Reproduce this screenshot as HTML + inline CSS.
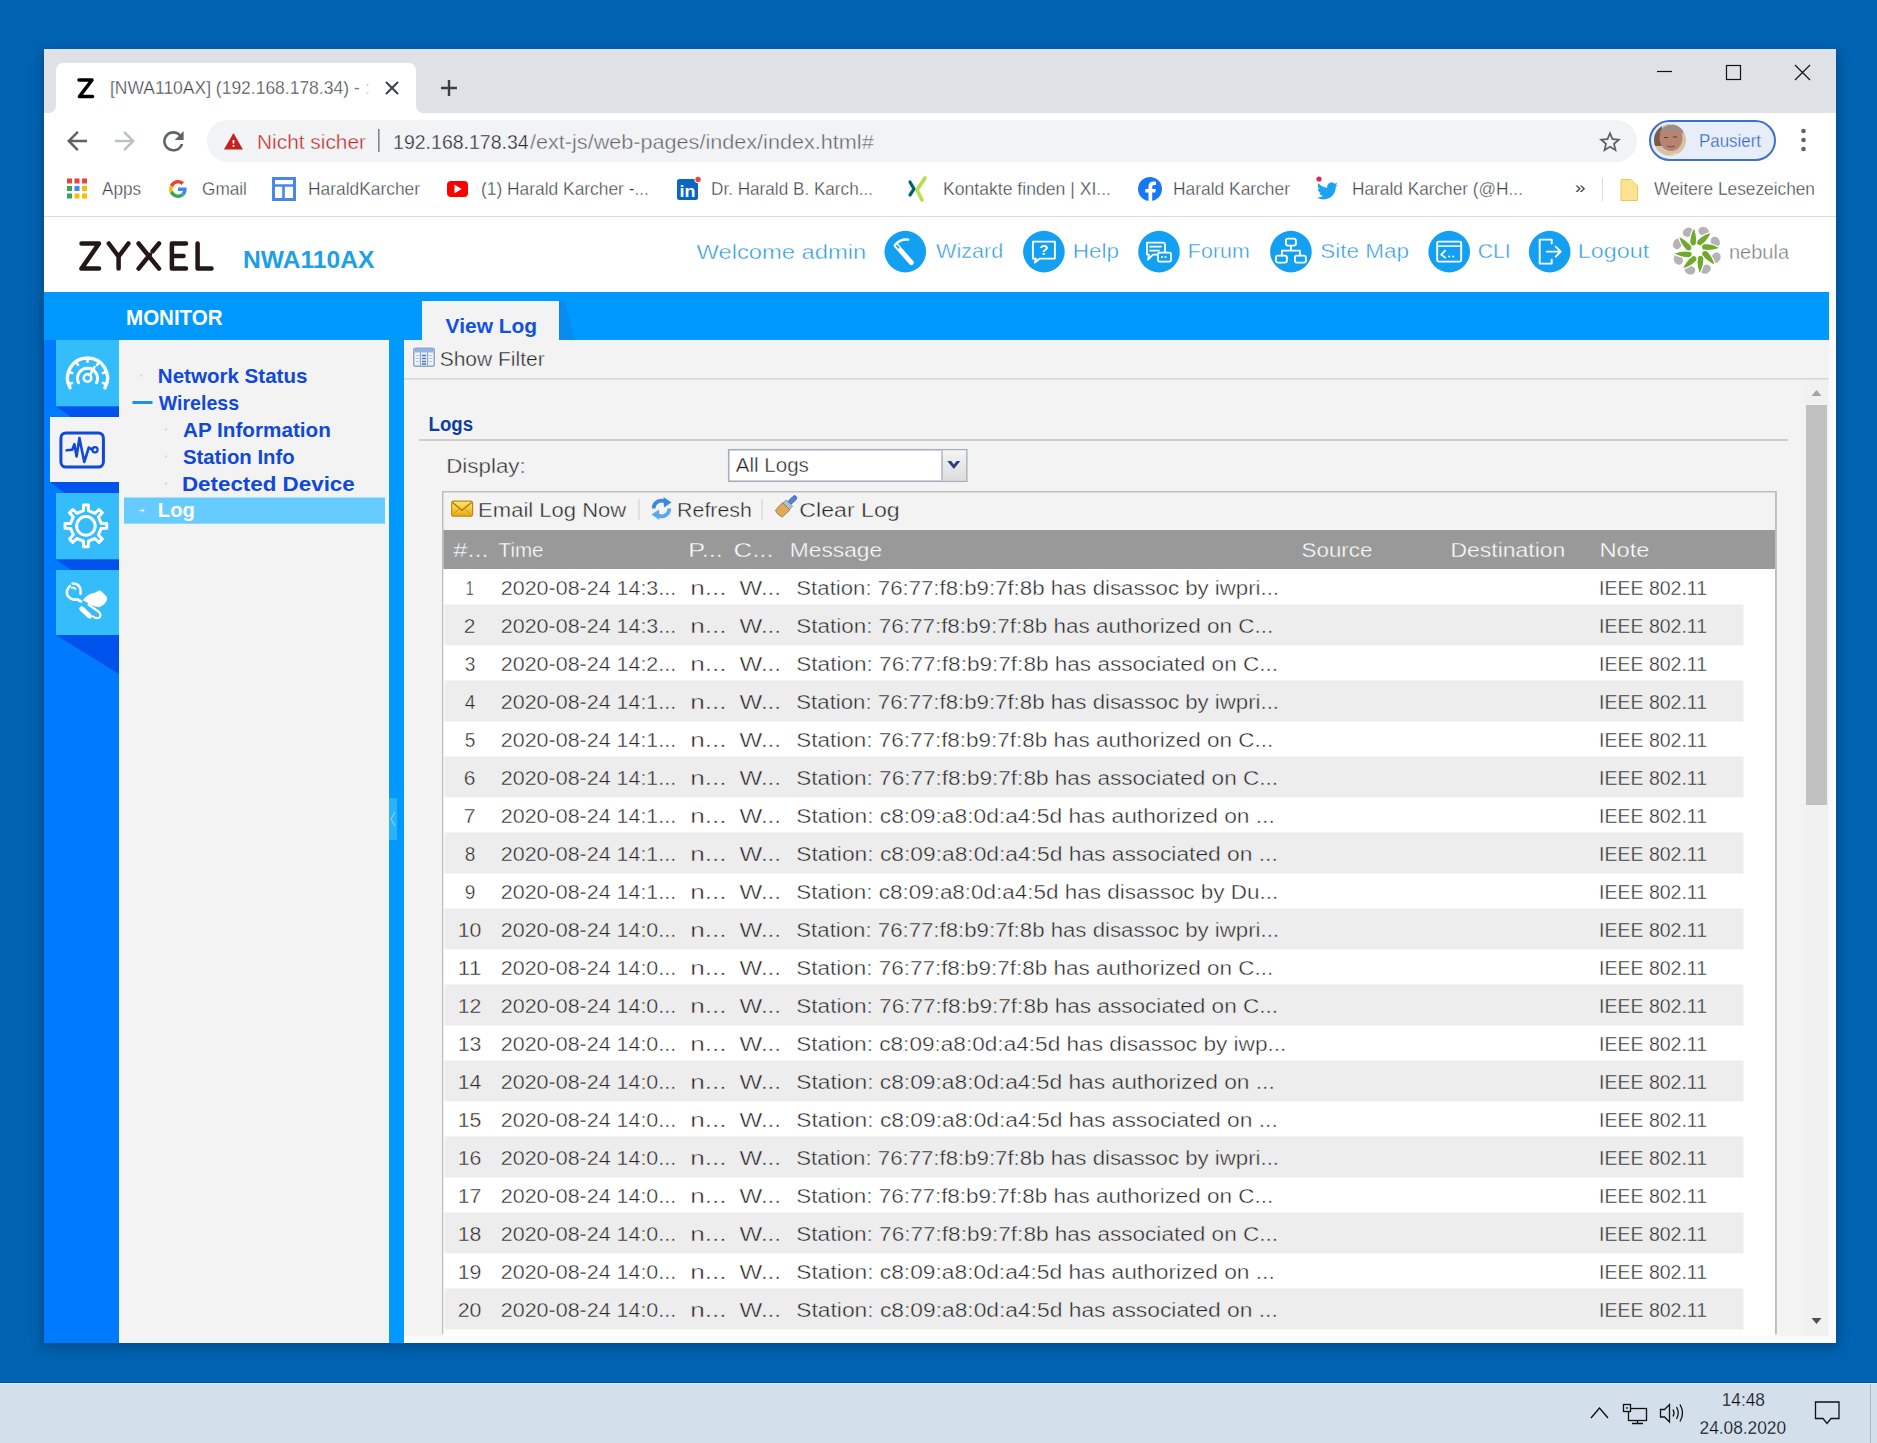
<!DOCTYPE html>
<html><head><meta charset="utf-8"><title>NWA110AX View Log</title>
<style>
html,body{margin:0;padding:0;width:1877px;height:1443px;overflow:hidden;background:#0063B1;}
svg{position:absolute;left:0;top:0;display:block;}
text{white-space:pre;}

</style></head><body>
<svg width="1877" height="1443" viewBox="0 0 1877 1443" font-family="Liberation Sans">
<rect x="0" y="0" width="1877" height="1383" fill="#0063B1" />
<defs><filter id="shd" x="-5%" y="-5%" width="110%" height="110%"><feGaussianBlur stdDeviation="6"/></filter><linearGradient id="tabfade" x1="0" x2="1"><stop offset="0" stop-color="#fff" stop-opacity="0"/><stop offset="1" stop-color="#fff"/></linearGradient><linearGradient id="trig" x1="0" x2="0" y1="0" y2="1"><stop offset="0" stop-color="#f4f4f4"/><stop offset="1" stop-color="#dcdcdc"/></linearGradient><radialGradient id="avatar" cx="0.45" cy="0.45" r="0.6"><stop offset="0" stop-color="#c89a82"/><stop offset="0.6" stop-color="#9a6d58"/><stop offset="1" stop-color="#d9c3a0"/></radialGradient></defs>
<rect x="41" y="52" width="1798" height="1296" fill="#00386a" filter="url(#shd)" opacity="0.5"/>
<rect x="0" y="1383" width="1877" height="60" fill="#D3DFEA" />
<rect x="44" y="49" width="1792" height="1294" fill="#FFFFFF" />
<rect x="44" y="49" width="1792" height="64" fill="#DEE1E6" />
<path d="M48 113 Q56 113 56 105 L56 71 Q56 63 64 63 L408 63 Q416 63 416 71 L416 105 Q416 113 424 113 Z" fill="#FFFFFF"/>
<path d="M79 80 L92 80 L79.5 96.5 L92.5 96.5" fill="none" stroke="#000" stroke-width="3.6" stroke-linejoin="round" stroke-linecap="round"/>
<text x="110.03" y="94" font-family="Liberation Sans" font-size="18" fill="#3C4043" textLength="238.94" lengthAdjust="spacingAndGlyphs"  stroke="#fff" stroke-width="0.35">[NWA110AX] (192.168.178.34)</text>
<text x="354.00" y="94" font-family="Liberation Sans" font-size="18" fill="#3C4043" >- :</text>
<rect x="349" y="70" width="24" height="36" fill="url(#tabfade)" />
<rect x="373" y="70" width="7" height="36" fill="#FFFFFF" />
<path d="M386.5 82.5 L397.5 93.5 M397.5 82.5 L386.5 93.5" stroke="#3C4043" stroke-width="2" stroke-linecap="round"/>
<path d="M449 80 V96 M441 88 H457" stroke="#3C4043" stroke-width="2.4"/>
<path d="M1657 71.5 H1672" stroke="#111" stroke-width="1.2"/>
<rect x="1726.5" y="65.5" width="14" height="14" fill="none" stroke="#111" stroke-width="1.2"/>
<path d="M1795 65 L1810 80 M1810 65 L1795 80" stroke="#111" stroke-width="1.2"/>
<g transform="translate(62,126) scale(1.25)"><path d="M20 11H7.83l5.59-5.59L12 4l-8 8 8 8 1.41-1.41L7.83 13H20v-2z" fill="#5F6368"/></g>
<g transform="translate(140,126) scale(-1.25,1.25)"><path d="M20 11H7.83l5.59-5.59L12 4l-8 8 8 8 1.41-1.41L7.83 13H20v-2z" fill="#BDC1C6"/></g>
<g transform="translate(158,126) scale(1.28)"><path d="M17.65 6.35C16.2 4.9 14.21 4 12 4c-4.42 0-7.99 3.58-7.99 8s3.57 8 7.99 8c3.73 0 6.84-2.55 7.73-6h-2.08c-.82 2.33-3.04 4-5.65 4-3.31 0-6-2.69-6-6s2.69-6 6-6c1.66 0 3.140.69 4.22 1.78L13 11h7V4l-2.35 2.35z" fill="#5F6368"/></g>
<rect x="207" y="120" width="1430" height="42" fill="#F1F3F4" rx="21" />
<g transform="translate(223.1,131.3) scale(0.864)"><path d="M1 21h22L12 2 1 21z" fill="#C5221F"/><path d="M13 18h-2v-2h2v2zm0-4h-2v-4h2v4z" fill="#fff"/></g>
<text x="257.01" y="149" font-family="Liberation Sans" font-size="21" fill="#C5221F" textLength="108.99" lengthAdjust="spacingAndGlyphs"  stroke="#F1F3F4" stroke-width="0.4">Nicht sicher</text>
<rect x="378" y="129" width="1.6" height="23" fill="#80868B" />
<text x="393.07" y="149" font-family="Liberation Sans" font-size="21" fill="#202124" textLength="135.63" lengthAdjust="spacingAndGlyphs"  stroke="#F1F3F4" stroke-width="0.4">192.168.178.34</text>
<text x="530.00" y="149" font-family="Liberation Sans" font-size="21" fill="#5F6368" textLength="343.67" lengthAdjust="spacingAndGlyphs"  stroke="#F1F3F4" stroke-width="0.4">/ext-js/web-pages/index/index.html#</text>
<g transform="translate(1596.8,128.8) scale(1.1)"><path d="M22 9.24l-7.19-.62L12 2 9.19 8.63 2 9.24l5.46 4.73L5.82 21 12 17.27 18.18 21l-1.63-7.03L22 9.24zM12 15.4l-3.76 2.27 1-4.28-3.32-2.880 4.38-.38L12 6.1l1.71 4.04 4.38.38-3.32 2.88 1 4.28L12 15.4z" fill="#5F6368"/></g>
<rect x="1650" y="121" width="125" height="39" rx="19.5" fill="#E8EEF9" stroke="#3E6FCB" stroke-width="2"/>
<clipPath id="avc"><circle cx="1670" cy="140" r="16"/></clipPath>
<g clip-path="url(#avc)"><rect x="1654" y="124" width="32" height="32" fill="#D6C3A4"/><rect x="1654" y="124" width="8" height="22" fill="#7A5A48"/><ellipse cx="1671" cy="138" rx="11.5" ry="13" fill="#B88472"/><path d="M1659 133 Q1664 123 1678 125 Q1684 128 1683 134 Q1676 128 1664 131 Z" fill="#9C8E86"/><path d="M1664 137.5 H1668 M1673 137 H1677" stroke="#5A3A30" stroke-width="1.2"/><path d="M1667 146 Q1671 148 1675 146" stroke="#7A4A3A" stroke-width="1" fill="none"/><path d="M1654 152 Q1664 158 1676 153 L1686 156 V160 H1654 Z" fill="#E6DAC4"/></g>
<text x="1699.06" y="147" font-family="Liberation Sans" font-size="18" fill="#2F62C8" textLength="61.94" lengthAdjust="spacingAndGlyphs"  stroke="#E8EEF9" stroke-width="0.3">Pausiert</text>
<circle cx="1803.5" cy="131" r="2.3" fill="#5F6368"/>
<circle cx="1803.5" cy="140" r="2.3" fill="#5F6368"/>
<circle cx="1803.5" cy="149" r="2.3" fill="#5F6368"/>
<rect x="44" y="216" width="1792" height="1" fill="#DADCE0" />
<rect x="67.0" y="178.5" width="5" height="5" fill="#EA4335" />
<rect x="74.5" y="178.5" width="5" height="5" fill="#EA4335" />
<rect x="82.0" y="178.5" width="5" height="5" fill="#EA4335" />
<rect x="67.0" y="186.0" width="5" height="5" fill="#34A853" />
<rect x="74.5" y="186.0" width="5" height="5" fill="#4285F4" />
<rect x="82.0" y="186.0" width="5" height="5" fill="#FBBC05" />
<rect x="67.0" y="193.5" width="5" height="5" fill="#34A853" />
<rect x="74.5" y="193.5" width="5" height="5" fill="#FBBC05" />
<rect x="82.0" y="193.5" width="5" height="5" fill="#FBBC05" />
<text x="102.00" y="195" font-family="Liberation Sans" font-size="18" fill="#3C4043" textLength="39.00" lengthAdjust="spacingAndGlyphs"  stroke="#fff" stroke-width="0.35">Apps</text>
<g transform="translate(169,180) scale(0.375)"><path fill="#EA4335" d="M24 9.5c3.54 0 6.71 1.220 9.21 3.6l6.85-6.85C35.9 2.38 30.47 0 24 0 14.62 0 6.51 5.38 2.56 13.22l7.98 6.19C12.43 13.72 17.740 9.5 24 9.5z"/><path fill="#4285F4" d="M46.98 24.55c0-1.57-.15-3.09-.38-4.55H24v9.02h12.94c-.58 2.96-2.26 5.48-4.78 7.18l7.73 6c4.51-4.18 7.09-10.36 7.09-17.65z"/><path fill="#FBBC05" d="M10.53 28.59c-.48-1.45-.76-2.99-.76-4.59s.27-3.14.76-4.59l-7.98-6.19C.92 16.46 0 20.12 0 24c0 3.88.92 7.54 2.56 10.78l7.97-6.19z"/><path fill="#34A853" d="M24 48c6.48 0 11.93-2.13 15.89-5.81l-7.73-6c-2.15 1.45-4.92 2.3-8.16 2.3-6.26 0-11.57-4.22-13.47-9.910l-7.98 6.19C6.51 42.62 14.62 48 24 48z"/></g>
<text x="202.00" y="195" font-family="Liberation Sans" font-size="18" fill="#3C4043" textLength="44.96" lengthAdjust="spacingAndGlyphs"  stroke="#fff" stroke-width="0.35">Gmail</text>
<rect x="273.5" y="178.5" width="21" height="21" fill="none" stroke="#4A86E8" stroke-width="3"/>
<path d="M273.5 185.5 H294.5 M283.5 185.5 V199.5" stroke="#4A86E8" stroke-width="2.6"/>
<text x="308.04" y="195" font-family="Liberation Sans" font-size="18" fill="#3C4043" textLength="111.96" lengthAdjust="spacingAndGlyphs"  stroke="#fff" stroke-width="0.35">HaraldKarcher</text>
<rect x="447" y="181" width="21" height="16" fill="#FF0000" rx="4" />
<path d="M454.5 184.5 L461.5 189 L454.5 193.5Z" fill="#fff"/>
<text x="481.04" y="195" font-family="Liberation Sans" font-size="18" fill="#3C4043" textLength="167.93" lengthAdjust="spacingAndGlyphs"  stroke="#fff" stroke-width="0.35">(1) Harald Karcher -...</text>
<rect x="677" y="179" width="21" height="21" fill="#0A66C2" rx="2.5" />
<text x="679.5" y="197" font-family="Liberation Sans" font-weight="bold" font-size="17" fill="#fff" textLength="16" lengthAdjust="spacingAndGlyphs">in</text>
<circle cx="698" cy="179.5" r="3.3" fill="#E8453C" stroke="#fff" stroke-width="1"/>
<text x="711.05" y="195" font-family="Liberation Sans" font-size="18" fill="#3C4043" textLength="161.91" lengthAdjust="spacingAndGlyphs"  stroke="#fff" stroke-width="0.35">Dr. Harald B. Karch...</text>
<path d="M910 182 L914 189 L910 195" stroke="#006567" stroke-width="3.2" fill="none" stroke-linecap="round"/>
<path d="M925 178 L917 190 L922 200" stroke="#B7DF4B" stroke-width="3.6" fill="none" stroke-linecap="round"/>
<text x="943.02" y="195" font-family="Liberation Sans" font-size="18" fill="#3C4043" textLength="167.96" lengthAdjust="spacingAndGlyphs"  stroke="#fff" stroke-width="0.35">Kontakte finden | XI...</text>
<circle cx="1150" cy="189" r="12" fill="#1877F2"/>
<path d="M1152.2 201 V192.5 H1155.3 L1155.8 189 H1152.2 V186.8 C1152.2 185.6 1152.8 184.9 1154.2 184.9 H1156 V181.8 C1155.2 181.7 1154.3 181.6 1153.4 181.6 C1150.4 181.6 1148.5 183.4 1148.5 186.5 V189 H1145.3 V192.5 H1148.5 V201Z" fill="#fff"/>
<text x="1173.03" y="195" font-family="Liberation Sans" font-size="18" fill="#3C4043" textLength="116.96" lengthAdjust="spacingAndGlyphs"  stroke="#fff" stroke-width="0.35">Harald Karcher</text>
<g transform="translate(1317,180.5) scale(0.87)"><path fill="#1DA1F2" d="M23.953 4.57a10 10 0 01-2.825.775 4.958 4.958 0 002.163-2.723c-.951.555-2.005.959-3.127 1.184a4.92 4.92 0 00-8.384 4.482C7.69 8.095 4.067 6.13 1.64 3.162a4.822 4.822 0 00-.666 2.475c0 1.71.87 3.213 2.188 4.096a4.904 4.904 0 01-2.228-.616v.06a4.923 4.923 0 003.946 4.827 4.996 4.996 0 01-2.212.085 4.936 4.936 0 004.604 3.417 9.867 9.867 0 01-6.102 2.105c-.39 0-.779-.023-1.17-.067a13.995 13.995 0 007.557 2.209c9.053 0 13.998-7.496 13.998-13.985 0-.21 0-.42-.015-.63A9.935 9.935 0 0024 4.59z"/></g>
<circle cx="1319" cy="179" r="2.6" fill="#E0245E"/>
<text x="1352.04" y="195" font-family="Liberation Sans" font-size="18" fill="#3C4043" textLength="170.92" lengthAdjust="spacingAndGlyphs"  stroke="#fff" stroke-width="0.35">Harald Karcher (@H...</text>
<text x="1575.00" y="193" font-family="Liberation Sans" font-size="17" fill="#3C4043" textLength="10.51" lengthAdjust="spacingAndGlyphs" >»</text>
<rect x="1602" y="178" width="1" height="23" fill="#DADCE0" />
<path d="M1621 179.5 H1631 L1637.5 186 V200.5 H1621 Z" fill="#FDE293" stroke="#F2C94C" stroke-width="1"/>
<text x="1654.00" y="195" font-family="Liberation Sans" font-size="18" fill="#3C4043" textLength="160.97" lengthAdjust="spacingAndGlyphs"  stroke="#fff" stroke-width="0.35">Weitere Lesezeichen</text>
<rect x="44" y="217" width="1792" height="75" fill="#FFFFFF" />
<g fill="none" stroke="#231815" stroke-width="4.5" stroke-linecap="round" stroke-linejoin="round"><path d="M81.5 243.5 H99 L81.5 268.6 H99"/><path d="M108.8 243.5 L118.6 256.5 L128.4 243.5 M118.6 256.5 V268.6"/><path d="M138.6 243.5 L159 268.6 M138.6 268.6 L149.8 254.8 M152.6 251.3 L159 243.5"/><path d="M186 243.5 H171.9 V268.6 H186 M171.9 256 H183.5"/><path d="M197.6 243.5 V268.6 H211.5"/></g>
<text x="243.00" y="268" font-family="Liberation Sans" font-size="24.5" fill="#1E9FE6" font-weight="bold" textLength="131.34" lengthAdjust="spacingAndGlyphs" >NWA110AX</text>
<text x="696.50" y="258.5" font-family="Liberation Sans" font-size="21" fill="#2A98DE" textLength="169.77" lengthAdjust="spacingAndGlyphs"  stroke="#fff" stroke-width="0.45">Welcome admin</text>
<circle cx="905.3" cy="251.6" r="20.8" fill="#14A0F2"/>
<text x="936.00" y="258" font-family="Liberation Sans" font-size="21" fill="#2A98DE" textLength="67.20" lengthAdjust="spacingAndGlyphs"  stroke="#fff" stroke-width="0.45">Wizard</text>
<circle cx="1043.9" cy="251.6" r="20.8" fill="#14A0F2"/>
<text x="1072.73" y="258" font-family="Liberation Sans" font-size="21" fill="#2A98DE" textLength="46.30" lengthAdjust="spacingAndGlyphs"  stroke="#fff" stroke-width="0.45">Help</text>
<circle cx="1159" cy="251.6" r="20.8" fill="#14A0F2"/>
<text x="1187.88" y="258" font-family="Liberation Sans" font-size="21" fill="#2A98DE" textLength="61.92" lengthAdjust="spacingAndGlyphs"  stroke="#fff" stroke-width="0.45">Forum</text>
<circle cx="1290.9" cy="251.6" r="20.8" fill="#14A0F2"/>
<text x="1320.30" y="258" font-family="Liberation Sans" font-size="21" fill="#2A98DE" textLength="88.73" lengthAdjust="spacingAndGlyphs"  stroke="#fff" stroke-width="0.45">Site Map</text>
<circle cx="1449.2" cy="251.6" r="20.8" fill="#14A0F2"/>
<text x="1477.79" y="258" font-family="Liberation Sans" font-size="21" fill="#2A98DE" textLength="32.85" lengthAdjust="spacingAndGlyphs"  stroke="#fff" stroke-width="0.45">CLI</text>
<circle cx="1549.7" cy="251.6" r="20.8" fill="#14A0F2"/>
<text x="1577.79" y="258" font-family="Liberation Sans" font-size="21" fill="#2A98DE" textLength="71.43" lengthAdjust="spacingAndGlyphs"  stroke="#fff" stroke-width="0.45">Logout</text>
<g transform="translate(905.3,251.6)"><path d="M-9 -6 L6 11" stroke="#fff" stroke-width="5" stroke-linecap="round"/><path d="M-8.5 -6 L6 10.5" stroke="#14A0F2" stroke-width="1.6" stroke-linecap="round" stroke-dasharray="3 40"/><path d="M-10 -7 Q-5 -13 3 -12" stroke="#fff" fill="none" stroke-linecap="round" stroke-linejoin="round" stroke-width="2.4"/></g>
<g transform="translate(1043.9,251.6)"><path d="M-11 -10 H11 V7 H-4 L-9 11 L-8 7 H-11 Z" stroke="#fff" fill="none" stroke-linecap="round" stroke-linejoin="round" stroke-width="1.9"/><text x="0" y="3.5" font-family="Liberation Sans" font-weight="bold" font-size="15" fill="#fff" text-anchor="middle">?</text></g>
<g transform="translate(1159,251.6)"><path d="M-12 -9 H4 Q6 -9 6 -7 V3 H-6 L-11 8 L-10 3 H-12 Z" stroke="#fff" fill="none" stroke-linecap="round" stroke-linejoin="round" stroke-width="1.8"/><path d="M-9 -5 H2 M-9 -1 H0" stroke="#fff" fill="none" stroke-linecap="round" stroke-linejoin="round" stroke-width="1.8"/><rect x="-1" y="1" width="13" height="9" rx="1.5" fill="#14A0F2" stroke="#fff" stroke-width="1.8"/><path d="M2 5.5 H9" stroke="#fff" stroke-width="1.5" stroke-dasharray="2 1.5"/></g>
<g transform="translate(1290.9,251.6)"><rect x="-5" y="-13" width="10" height="7" rx="2" stroke="#fff" fill="none" stroke-linecap="round" stroke-linejoin="round" stroke-width="1.9"/><path d="M0 -6 V-1 M-9 -1 H9 M-9 -1 V4 M9 -1 V4" stroke="#fff" fill="none" stroke-linecap="round" stroke-linejoin="round" stroke-width="1.8"/><rect x="-15" y="4" width="11" height="7" rx="2" stroke="#fff" fill="none" stroke-linecap="round" stroke-linejoin="round" stroke-width="1.9"/><rect x="4" y="4" width="11" height="7" rx="2" stroke="#fff" fill="none" stroke-linecap="round" stroke-linejoin="round" stroke-width="1.9"/></g>
<g transform="translate(1449.2,251.6)"><rect x="-12" y="-10" width="24" height="20" rx="1.5" stroke="#fff" fill="none" stroke-linecap="round" stroke-linejoin="round" stroke-width="1.9"/><path d="M-12 -5.5 H12" stroke="#fff" stroke-width="1.5"/><path d="M-4 -1 L-8 3 L-4 6" stroke="#fff" fill="none" stroke-linecap="round" stroke-linejoin="round" stroke-width="1.8"/><circle cx="0" cy="5" r="1" fill="#fff"/><circle cx="4" cy="5" r="1" fill="#fff"/></g>
<g transform="translate(1549.7,251.6)"><path d="M2 -8 V-12 H-10 V12 H2 V8" stroke="#fff" fill="none" stroke-linecap="round" stroke-linejoin="round" stroke-width="1.9"/><path d="M-3 0 H11 M6 -5 L11 0 L6 5" stroke="#fff" fill="none" stroke-linecap="round" stroke-linejoin="round" stroke-width="1.9"/></g>
<g transform="translate(1696.8,250.7)"><g transform="rotate(-25.5)"><ellipse cx="0" cy="-20.5" rx="5.4" ry="4.4" fill="#B4B4B8"/></g><g transform="rotate(19.5)"><ellipse cx="0" cy="-20.5" rx="5.4" ry="4.4" fill="#B4B4B8"/></g><g transform="rotate(64.5)"><ellipse cx="0" cy="-20.5" rx="5.4" ry="4.4" fill="#B4B4B8"/></g><g transform="rotate(109.5)"><ellipse cx="0" cy="-20.5" rx="5.4" ry="4.4" fill="#B4B4B8"/></g><g transform="rotate(154.5)"><ellipse cx="0" cy="-20.5" rx="5.4" ry="4.4" fill="#B4B4B8"/></g><g transform="rotate(199.5)"><ellipse cx="0" cy="-20.5" rx="5.4" ry="4.4" fill="#B4B4B8"/></g><g transform="rotate(244.5)"><ellipse cx="0" cy="-20.5" rx="5.4" ry="4.4" fill="#B4B4B8"/></g><g transform="rotate(289.5)"><ellipse cx="0" cy="-20.5" rx="5.4" ry="4.4" fill="#B4B4B8"/></g><g transform="rotate(-3.0)"><path d="M-6.8 -8.5 Q-6 -18 -1.2 -23.5 Q1.5 -14 0 -6.5 Q-1.8 -4 -4.4 -4.8 Q-6.8 -6 -6.8 -8.5 Z" fill="#6FAA2A" stroke="#fff" stroke-width="1.3"/></g><g transform="rotate(42.0)"><path d="M-6.8 -8.5 Q-6 -18 -1.2 -23.5 Q1.5 -14 0 -6.5 Q-1.8 -4 -4.4 -4.8 Q-6.8 -6 -6.8 -8.5 Z" fill="#6FAA2A" stroke="#fff" stroke-width="1.3"/></g><g transform="rotate(87.0)"><path d="M-6.8 -8.5 Q-6 -18 -1.2 -23.5 Q1.5 -14 0 -6.5 Q-1.8 -4 -4.4 -4.8 Q-6.8 -6 -6.8 -8.5 Z" fill="#6FAA2A" stroke="#fff" stroke-width="1.3"/></g><g transform="rotate(132.0)"><path d="M-6.8 -8.5 Q-6 -18 -1.2 -23.5 Q1.5 -14 0 -6.5 Q-1.8 -4 -4.4 -4.8 Q-6.8 -6 -6.8 -8.5 Z" fill="#6FAA2A" stroke="#fff" stroke-width="1.3"/></g><g transform="rotate(177.0)"><path d="M-6.8 -8.5 Q-6 -18 -1.2 -23.5 Q1.5 -14 0 -6.5 Q-1.8 -4 -4.4 -4.8 Q-6.8 -6 -6.8 -8.5 Z" fill="#6FAA2A" stroke="#fff" stroke-width="1.3"/></g><g transform="rotate(222.0)"><path d="M-6.8 -8.5 Q-6 -18 -1.2 -23.5 Q1.5 -14 0 -6.5 Q-1.8 -4 -4.4 -4.8 Q-6.8 -6 -6.8 -8.5 Z" fill="#6FAA2A" stroke="#fff" stroke-width="1.3"/></g><g transform="rotate(267.0)"><path d="M-6.8 -8.5 Q-6 -18 -1.2 -23.5 Q1.5 -14 0 -6.5 Q-1.8 -4 -4.4 -4.8 Q-6.8 -6 -6.8 -8.5 Z" fill="#6FAA2A" stroke="#fff" stroke-width="1.3"/></g><g transform="rotate(312.0)"><path d="M-6.8 -8.5 Q-6 -18 -1.2 -23.5 Q1.5 -14 0 -6.5 Q-1.8 -4 -4.4 -4.8 Q-6.8 -6 -6.8 -8.5 Z" fill="#6FAA2A" stroke="#fff" stroke-width="1.3"/></g></g>
<text x="1729.00" y="259" font-family="Liberation Sans" font-size="20" fill="#7A7A7A"  stroke="#fff" stroke-width="0.4">nebula</text>
<rect x="44" y="292" width="1785" height="48" fill="#0099FF" />
<rect x="1829" y="292" width="7" height="1051" fill="#FAFAFA" />
<text x="126.05" y="325" font-family="Liberation Sans" font-size="21.5" fill="#FFFFFF" font-weight="bold" textLength="96.50" lengthAdjust="spacingAndGlyphs" >MONITOR</text>
<path d="M559 301 L565 301 L575 340 L559 340 Z" fill="#0A8BF0"/>
<rect x="422" y="301" width="137" height="40" fill="#F3F3F3" />
<text x="445.60" y="333" font-family="Liberation Sans" font-size="20.5" fill="#1352DE" font-weight="bold" textLength="91.53" lengthAdjust="spacingAndGlyphs" >View Log</text>
<rect x="44" y="340" width="75" height="1003" fill="#007AFF" />
<rect x="56" y="340" width="63" height="66.5" fill="#35BCFA" />
<path d="M56 406.5 H119 V417 H71 Z" fill="#0052EC"/>
<rect x="50" y="417" width="69" height="65" fill="#F3F3F3" />
<path d="M50 482 H119 V493 H65 Z" fill="#0052EC"/>
<rect x="56" y="493" width="63" height="66.5" fill="#35BCFA" />
<path d="M56 559.5 H119 V570 H71 Z" fill="#0052EC"/>
<rect x="56" y="570" width="63" height="65" fill="#35BCFA" />
<path d="M56 635 H119 V674 Z" fill="#0052EC"/>
<g transform="translate(87.5,378)" stroke="#fff" fill="none" stroke-linecap="round"><path d="M-17.4 9.8 A20 20 0 1 1 17.4 9.8" stroke-width="3.4"/><path d="M-18.55 6.03 L-15.41 5.01" stroke-width="2.6"/><path d="M-18.55 -6.03 L-15.41 -5.01" stroke-width="2.6"/><path d="M-11.46 -15.78 L-9.52 -13.11" stroke-width="2.6"/><path d="M-0.00 -19.50 L-0.00 -16.20" stroke-width="2.6"/><path d="M11.46 -15.78 L9.52 -13.11" stroke-width="2.6"/><path d="M18.55 -6.03 L15.41 -5.01" stroke-width="2.6"/><path d="M18.55 6.03 L15.41 5.01" stroke-width="2.6"/><path d="M-9 4.6 A10 10 0 1 1 9 4.6" stroke-width="3"/><circle cx="0" cy="0" r="3.8" stroke-width="2.6"/><path d="M2.6 -3.2 L7 -11" stroke-width="2.6"/></g>
<rect x="60.9" y="432.9" width="42.5" height="34.2" rx="5" fill="none" stroke="#1048D8" stroke-width="3"/>
<polyline points="66.6,450.3 72.2,449.7 74.4,444.2 76.6,456.4 79.4,438.1 84.3,461.9 88.8,447.5 92.2,449.7" fill="none" stroke="#1048D8" stroke-width="2.6" stroke-linejoin="round" stroke-linecap="round"/>
<circle cx="95" cy="449.7" r="2.6" fill="none" stroke="#1048D8" stroke-width="2.2"/>
<path d="M83.39 510.60 L83.53 505.03 L88.27 505.03 L88.41 510.60 L94.94 513.31 L98.98 509.47 L102.33 512.82 L98.49 516.86 L101.20 523.39 L106.77 523.53 L106.77 528.27 L101.20 528.41 L98.49 534.94 L102.33 538.98 L98.98 542.33 L94.94 538.49 L88.41 541.20 L88.27 546.77 L83.53 546.77 L83.39 541.20 L76.86 538.49 L72.82 542.33 L69.47 538.98 L73.31 534.94 L70.60 528.41 L65.03 528.27 L65.03 523.53 L70.60 523.39 L73.31 516.86 L69.47 512.82 L72.82 509.47 L76.86 513.31 Z" fill="none" stroke="#fff" stroke-width="3" stroke-linejoin="round"/>
<circle cx="85.9" cy="525.9" r="9.3" fill="none" stroke="#fff" stroke-width="3"/>
<g fill="none" stroke="#fff" stroke-linecap="round" stroke-linejoin="round"><path d="M70 586 Q65.5 590 67.5 595.5 Q71 600.5 77.5 599.5 L81 601.5" stroke-width="2.6"/><path d="M72.5 583.5 Q78.5 583 80.5 589 L80.5 594" stroke-width="2.4"/><path d="M72 588 Q74 586.5 75.5 589" stroke-width="2"/><path d="M84 600 Q88 594.5 95 593.5 L100 591 L106 597 Q107 601 103 604 L99 606.5 Q92 605 88 602 Z" fill="#fff" stroke-width="1.6"/><path d="M81.8 608.8 L89.5 616" stroke-width="5"/><path d="M88.5 604.5 L99 612 Q102 615.5 99 617.8 Q96 619 93 616.5" stroke-width="2.2"/></g>
<rect x="119" y="340" width="270" height="1003" fill="#F3F3F3" />
<rect x="389" y="340" width="15" height="1003" fill="#0099FF" />
<path d="M389 798 H397 V840 H389 Z" fill="#35B8FA" opacity="0.8"/><path d="M395 812 L391 819 L395 826" stroke="#7fd2ff" stroke-width="1.2" fill="none"/>
<circle cx="141" cy="375.5" r="1.2" fill="#D8D8E8"/>
<text x="157.82" y="383" font-family="Liberation Sans" font-size="21" fill="#1048D8" font-weight="bold" textLength="149.64" lengthAdjust="spacingAndGlyphs" >Network Status</text>
<rect x="132.5" y="401" width="20" height="3" fill="#1E90E8" />
<text x="158.80" y="410" font-family="Liberation Sans" font-size="21" fill="#1048D8" font-weight="bold" textLength="80.23" lengthAdjust="spacingAndGlyphs" >Wireless</text>
<circle cx="166" cy="429.5" r="1.2" fill="#D8D8E8"/>
<circle cx="166" cy="456.5" r="1.2" fill="#D8D8E8"/>
<circle cx="166" cy="483.5" r="1.2" fill="#D8D8E8"/>
<text x="183.00" y="437" font-family="Liberation Sans" font-size="21" fill="#1048D8" font-weight="bold" textLength="147.81" lengthAdjust="spacingAndGlyphs" >AP Information</text>
<text x="183.00" y="464" font-family="Liberation Sans" font-size="21" fill="#1048D8" font-weight="bold" textLength="111.60" lengthAdjust="spacingAndGlyphs" >Station Info</text>
<text x="181.94" y="491" font-family="Liberation Sans" font-size="21" fill="#1048D8" font-weight="bold" textLength="172.79" lengthAdjust="spacingAndGlyphs" >Detected Device</text>
<rect x="124" y="497.5" width="261" height="26.2" fill="#66CCFF" />
<path d="M139 510.5 H144 M142 508.5 L144 510.5 L142 512.5" stroke="#e8f7ff" stroke-width="1" fill="none"/>
<text x="157.84" y="517" font-family="Liberation Sans" font-size="21" fill="#FFFFFF" font-weight="bold" textLength="36.96" lengthAdjust="spacingAndGlyphs" >Log</text>
<rect x="404" y="340" width="1425" height="996" fill="#F3F3F3" />
<rect x="404" y="1336" width="1432" height="7" fill="#FCFCFC" />
<g transform="translate(413,347.5)"><rect x="0.75" y="0.75" width="20.5" height="18" rx="2" fill="#EEF3FA" stroke="#93A7C6" stroke-width="1.5"/><rect x="1.5" y="1.5" width="19" height="3.5" fill="#8FB3E8"/><path d="M7.5 5 V18 M14.5 5 V18" stroke="#93A7C6" stroke-width="1.2"/><path d="M3 8 H6.5 M3 11 H6.5 M3 14 H6.5 M15.5 8 H19 M15.5 11 H19 M15.5 14 H19" stroke="#B9C7DC" stroke-width="1.2"/><path d="M9 8 H13 M9 11 H13 M9 14 H13 M9 16.5 H13" stroke="#4A78C8" stroke-width="1.4"/></g>
<text x="439.70" y="366" font-family="Liberation Sans" font-size="20" fill="#222222" textLength="104.94" lengthAdjust="spacingAndGlyphs"  stroke="#F3F3F3" stroke-width="0.4">Show Filter</text>
<rect x="404" y="378" width="1425" height="1.5" fill="#D6D6D6" />
<rect x="1805" y="380" width="23" height="956" fill="#F1F1F1" />
<path d="M1811.5 396 L1816.5 390 L1821.5 396 Z" fill="#A3A3A3"/>
<rect x="1806" y="405" width="21" height="400" fill="#C1C1C1" />
<path d="M1811.5 1318 L1816.5 1324 L1821.5 1318 Z" fill="#505050"/>
<text x="428.57" y="431" font-family="Liberation Sans" font-size="20" fill="#0E3E9E" font-weight="bold" textLength="44.55" lengthAdjust="spacingAndGlyphs" >Logs</text>
<rect x="419" y="439" width="1369" height="2" fill="#CFCFCF" />
<text x="446.18" y="473.4" font-family="Liberation Sans" font-size="20" fill="#2a2a2a" textLength="79.56" lengthAdjust="spacingAndGlyphs"  stroke="#F3F3F3" stroke-width="0.4">Display:</text>
<rect x="728.75" y="449.75" width="238" height="31.5" fill="#FFFFFF" stroke="#A9ADBD" stroke-width="1.6"/>
<rect x="941.5" y="450.5" width="24.7" height="30" fill="url(#trig)"/>
<rect x="941.3" y="450.5" width="1.4" height="30" fill="#AEB2C2" />
<path d="M947.3 460.9 L951.2 460.9 L953.9 464.4 L956.6 460.9 L960.3 460.9 L953.9 469 Z" fill="#2B3C82"/>
<text x="735.80" y="472" font-family="Liberation Sans" font-size="20" fill="#222222" textLength="73.10" lengthAdjust="spacingAndGlyphs"  stroke="#FFFFFF" stroke-width="0.4">All Logs</text>
<rect x="442" y="491" width="1334" height="845" fill="#F3F3F3" />
<path d="M442.75 1334 V491.75 H1775.75 V1334" fill="none" stroke="#BDBDBD" stroke-width="1.5"/>
<defs><linearGradient id="envg" x1="0" x2="0" y1="0" y2="1"><stop offset="0" stop-color="#FFE577"/><stop offset="1" stop-color="#E9AA10"/></linearGradient></defs>
<g transform="translate(451,500.5)"><rect x="0.6" y="0.6" width="21" height="15" rx="2.2" fill="url(#envg)" stroke="#C08A0C" stroke-width="1.2"/><path d="M1.5 2 L11 9.8 L20.5 2" fill="none" stroke="#B07A08" stroke-width="1.4"/><path d="M1.2 14.8 L8.3 8.3 M20.8 14.8 L13.7 8.3" stroke="#D39A10" stroke-width="1"/></g>
<text x="478.10" y="516.7" font-family="Liberation Sans" font-size="20" fill="#222222" textLength="148.19" lengthAdjust="spacingAndGlyphs"  stroke="#F3F3F3" stroke-width="0.4">Email Log Now</text>
<rect x="638.5" y="499" width="1" height="21" fill="#CFCFCF" />
<g transform="translate(661.5,508.5)" fill="none" stroke-linecap="butt"><path d="M-7.8 0 A7.8 7.8 0 0 1 4.5 -6.4" stroke="#3A8AE0" stroke-width="3.8"/><path d="M2 -11.5 L10 -6 L2.5 -1 Z" fill="#3A8AE0"/><path d="M7.8 0 A7.8 7.8 0 0 1 -4.5 6.4" stroke="#5BA8F0" stroke-width="3.8"/><path d="M-2 11.5 L-10 6 L-2.5 1 Z" fill="#5BA8F0"/></g>
<text x="677.13" y="516.7" font-family="Liberation Sans" font-size="20" fill="#222222" textLength="74.77" lengthAdjust="spacingAndGlyphs"  stroke="#F3F3F3" stroke-width="0.4">Refresh</text>
<rect x="761.5" y="499" width="1" height="21" fill="#CFCFCF" />
<g transform="translate(785.5,507) rotate(45)"><rect x="-2.2" y="-15" width="4.4" height="10" rx="2.2" fill="#4F83D6" stroke="#2F5FAE" stroke-width="0.8"/><rect x="-4.5" y="-5.5" width="9" height="4.5" fill="#AFC0D4" stroke="#7A8BA0" stroke-width="0.8"/><path d="M-5.2 -1 H5.2 L4.8 9.5 Q0 11.5 -4.8 9.5 Z" fill="#DDA95E" stroke="#A97A34" stroke-width="0.9"/></g>
<text x="799.34" y="516.7" font-family="Liberation Sans" font-size="20" fill="#222222" textLength="100.36" lengthAdjust="spacingAndGlyphs"  stroke="#F3F3F3" stroke-width="0.4">Clear Log</text>
<rect x="443.5" y="530" width="1331.5" height="39" fill="#999999" />
<text x="453.30" y="557" font-family="Liberation Sans" font-size="20" fill="#FFFFFF" textLength="35.38" lengthAdjust="spacingAndGlyphs"  stroke="#999999" stroke-width="0.35">#...</text>
<text x="498.60" y="557" font-family="Liberation Sans" font-size="20" fill="#FFFFFF" textLength="44.93" lengthAdjust="spacingAndGlyphs"  stroke="#999999" stroke-width="0.35">Time</text>
<text x="688.24" y="557" font-family="Liberation Sans" font-size="20" fill="#FFFFFF" textLength="34.63" lengthAdjust="spacingAndGlyphs"  stroke="#999999" stroke-width="0.35">P...</text>
<text x="733.61" y="557" font-family="Liberation Sans" font-size="20" fill="#FFFFFF" textLength="39.99" lengthAdjust="spacingAndGlyphs"  stroke="#999999" stroke-width="0.35">C...</text>
<text x="789.86" y="557" font-family="Liberation Sans" font-size="20" fill="#FFFFFF" textLength="92.28" lengthAdjust="spacingAndGlyphs"  stroke="#999999" stroke-width="0.35">Message</text>
<text x="1301.60" y="557" font-family="Liberation Sans" font-size="20" fill="#FFFFFF" textLength="70.74" lengthAdjust="spacingAndGlyphs"  stroke="#999999" stroke-width="0.35">Source</text>
<text x="1450.45" y="557" font-family="Liberation Sans" font-size="20" fill="#FFFFFF" textLength="114.94" lengthAdjust="spacingAndGlyphs"  stroke="#999999" stroke-width="0.35">Destination</text>
<text x="1599.41" y="557" font-family="Liberation Sans" font-size="20" fill="#FFFFFF" textLength="50.13" lengthAdjust="spacingAndGlyphs"  stroke="#999999" stroke-width="0.35">Note</text>
<rect x="443.5" y="569" width="1331.5" height="767" fill="#FFFFFF" />
<text x="465.68" y="594.5" font-family="Liberation Sans" font-size="20" fill="#262626" textLength="8.01" lengthAdjust="spacingAndGlyphs"  stroke="#FFFFFF" stroke-width="0.4">1</text>
<text x="500.83" y="594.5" font-family="Liberation Sans" font-size="20" fill="#262626" textLength="175.34" lengthAdjust="spacingAndGlyphs"  stroke="#FFFFFF" stroke-width="0.4">2020-08-24 14:3...</text>
<text x="690.29" y="594.5" font-family="Liberation Sans" font-size="20" fill="#262626" textLength="36.34" lengthAdjust="spacingAndGlyphs"  stroke="#FFFFFF" stroke-width="0.4">n...</text>
<text x="739.50" y="594.5" font-family="Liberation Sans" font-size="20" fill="#262626" textLength="41.47" lengthAdjust="spacingAndGlyphs"  stroke="#FFFFFF" stroke-width="0.4">W...</text>
<text x="796.30" y="594.5" font-family="Liberation Sans" font-size="20" fill="#262626" textLength="482.73" lengthAdjust="spacingAndGlyphs"  stroke="#FFFFFF" stroke-width="0.4">Station: 76:77:f8:b9:7f:8b has disassoc by iwpri...</text>
<text x="1599.02" y="594.5" font-family="Liberation Sans" font-size="20" fill="#262626" textLength="108.10" lengthAdjust="spacingAndGlyphs"  stroke="#FFFFFF" stroke-width="0.4">IEEE 802.11</text>
<rect x="444.5" y="604.5" width="1299" height="41" fill="#EDEDED" />
<text x="463.70" y="632.5" font-family="Liberation Sans" font-size="20" fill="#262626" textLength="11.68" lengthAdjust="spacingAndGlyphs"  stroke="#EDEDED" stroke-width="0.4">2</text>
<text x="500.83" y="632.5" font-family="Liberation Sans" font-size="20" fill="#262626" textLength="175.34" lengthAdjust="spacingAndGlyphs"  stroke="#EDEDED" stroke-width="0.4">2020-08-24 14:3...</text>
<text x="690.29" y="632.5" font-family="Liberation Sans" font-size="20" fill="#262626" textLength="36.34" lengthAdjust="spacingAndGlyphs"  stroke="#EDEDED" stroke-width="0.4">n...</text>
<text x="739.50" y="632.5" font-family="Liberation Sans" font-size="20" fill="#262626" textLength="41.47" lengthAdjust="spacingAndGlyphs"  stroke="#EDEDED" stroke-width="0.4">W...</text>
<text x="796.30" y="632.5" font-family="Liberation Sans" font-size="20" fill="#262626" textLength="476.95" lengthAdjust="spacingAndGlyphs"  stroke="#EDEDED" stroke-width="0.4">Station: 76:77:f8:b9:7f:8b has authorized on C...</text>
<text x="1599.02" y="632.5" font-family="Liberation Sans" font-size="20" fill="#262626" textLength="108.10" lengthAdjust="spacingAndGlyphs"  stroke="#EDEDED" stroke-width="0.4">IEEE 802.11</text>
<text x="464.75" y="670.5" font-family="Liberation Sans" font-size="20" fill="#262626" textLength="10.62" lengthAdjust="spacingAndGlyphs"  stroke="#FFFFFF" stroke-width="0.4">3</text>
<text x="500.83" y="670.5" font-family="Liberation Sans" font-size="20" fill="#262626" textLength="175.34" lengthAdjust="spacingAndGlyphs"  stroke="#FFFFFF" stroke-width="0.4">2020-08-24 14:2...</text>
<text x="690.29" y="670.5" font-family="Liberation Sans" font-size="20" fill="#262626" textLength="36.34" lengthAdjust="spacingAndGlyphs"  stroke="#FFFFFF" stroke-width="0.4">n...</text>
<text x="739.50" y="670.5" font-family="Liberation Sans" font-size="20" fill="#262626" textLength="41.47" lengthAdjust="spacingAndGlyphs"  stroke="#FFFFFF" stroke-width="0.4">W...</text>
<text x="796.30" y="670.5" font-family="Liberation Sans" font-size="20" fill="#262626" textLength="481.76" lengthAdjust="spacingAndGlyphs"  stroke="#FFFFFF" stroke-width="0.4">Station: 76:77:f8:b9:7f:8b has associated on C...</text>
<text x="1599.02" y="670.5" font-family="Liberation Sans" font-size="20" fill="#262626" textLength="108.10" lengthAdjust="spacingAndGlyphs"  stroke="#FFFFFF" stroke-width="0.4">IEEE 802.11</text>
<rect x="444.5" y="680.5" width="1299" height="41" fill="#EDEDED" />
<text x="464.75" y="708.5" font-family="Liberation Sans" font-size="20" fill="#262626" textLength="10.62" lengthAdjust="spacingAndGlyphs"  stroke="#EDEDED" stroke-width="0.4">4</text>
<text x="500.83" y="708.5" font-family="Liberation Sans" font-size="20" fill="#262626" textLength="175.34" lengthAdjust="spacingAndGlyphs"  stroke="#EDEDED" stroke-width="0.4">2020-08-24 14:1...</text>
<text x="690.29" y="708.5" font-family="Liberation Sans" font-size="20" fill="#262626" textLength="36.34" lengthAdjust="spacingAndGlyphs"  stroke="#EDEDED" stroke-width="0.4">n...</text>
<text x="739.50" y="708.5" font-family="Liberation Sans" font-size="20" fill="#262626" textLength="41.47" lengthAdjust="spacingAndGlyphs"  stroke="#EDEDED" stroke-width="0.4">W...</text>
<text x="796.30" y="708.5" font-family="Liberation Sans" font-size="20" fill="#262626" textLength="482.73" lengthAdjust="spacingAndGlyphs"  stroke="#EDEDED" stroke-width="0.4">Station: 76:77:f8:b9:7f:8b has disassoc by iwpri...</text>
<text x="1599.02" y="708.5" font-family="Liberation Sans" font-size="20" fill="#262626" textLength="108.10" lengthAdjust="spacingAndGlyphs"  stroke="#EDEDED" stroke-width="0.4">IEEE 802.11</text>
<text x="464.75" y="746.5" font-family="Liberation Sans" font-size="20" fill="#262626" textLength="10.62" lengthAdjust="spacingAndGlyphs"  stroke="#FFFFFF" stroke-width="0.4">5</text>
<text x="500.83" y="746.5" font-family="Liberation Sans" font-size="20" fill="#262626" textLength="175.34" lengthAdjust="spacingAndGlyphs"  stroke="#FFFFFF" stroke-width="0.4">2020-08-24 14:1...</text>
<text x="690.29" y="746.5" font-family="Liberation Sans" font-size="20" fill="#262626" textLength="36.34" lengthAdjust="spacingAndGlyphs"  stroke="#FFFFFF" stroke-width="0.4">n...</text>
<text x="739.50" y="746.5" font-family="Liberation Sans" font-size="20" fill="#262626" textLength="41.47" lengthAdjust="spacingAndGlyphs"  stroke="#FFFFFF" stroke-width="0.4">W...</text>
<text x="796.30" y="746.5" font-family="Liberation Sans" font-size="20" fill="#262626" textLength="476.95" lengthAdjust="spacingAndGlyphs"  stroke="#FFFFFF" stroke-width="0.4">Station: 76:77:f8:b9:7f:8b has authorized on C...</text>
<text x="1599.02" y="746.5" font-family="Liberation Sans" font-size="20" fill="#262626" textLength="108.10" lengthAdjust="spacingAndGlyphs"  stroke="#FFFFFF" stroke-width="0.4">IEEE 802.11</text>
<rect x="444.5" y="756.5" width="1299" height="41" fill="#EDEDED" />
<text x="463.70" y="784.5" font-family="Liberation Sans" font-size="20" fill="#262626" textLength="11.68" lengthAdjust="spacingAndGlyphs"  stroke="#EDEDED" stroke-width="0.4">6</text>
<text x="500.83" y="784.5" font-family="Liberation Sans" font-size="20" fill="#262626" textLength="175.34" lengthAdjust="spacingAndGlyphs"  stroke="#EDEDED" stroke-width="0.4">2020-08-24 14:1...</text>
<text x="690.29" y="784.5" font-family="Liberation Sans" font-size="20" fill="#262626" textLength="36.34" lengthAdjust="spacingAndGlyphs"  stroke="#EDEDED" stroke-width="0.4">n...</text>
<text x="739.50" y="784.5" font-family="Liberation Sans" font-size="20" fill="#262626" textLength="41.47" lengthAdjust="spacingAndGlyphs"  stroke="#EDEDED" stroke-width="0.4">W...</text>
<text x="796.30" y="784.5" font-family="Liberation Sans" font-size="20" fill="#262626" textLength="481.76" lengthAdjust="spacingAndGlyphs"  stroke="#EDEDED" stroke-width="0.4">Station: 76:77:f8:b9:7f:8b has associated on C...</text>
<text x="1599.02" y="784.5" font-family="Liberation Sans" font-size="20" fill="#262626" textLength="108.10" lengthAdjust="spacingAndGlyphs"  stroke="#EDEDED" stroke-width="0.4">IEEE 802.11</text>
<text x="463.70" y="822.5" font-family="Liberation Sans" font-size="20" fill="#262626" textLength="11.68" lengthAdjust="spacingAndGlyphs"  stroke="#FFFFFF" stroke-width="0.4">7</text>
<text x="500.83" y="822.5" font-family="Liberation Sans" font-size="20" fill="#262626" textLength="175.34" lengthAdjust="spacingAndGlyphs"  stroke="#FFFFFF" stroke-width="0.4">2020-08-24 14:1...</text>
<text x="690.29" y="822.5" font-family="Liberation Sans" font-size="20" fill="#262626" textLength="36.34" lengthAdjust="spacingAndGlyphs"  stroke="#FFFFFF" stroke-width="0.4">n...</text>
<text x="739.50" y="822.5" font-family="Liberation Sans" font-size="20" fill="#262626" textLength="41.47" lengthAdjust="spacingAndGlyphs"  stroke="#FFFFFF" stroke-width="0.4">W...</text>
<text x="796.30" y="822.5" font-family="Liberation Sans" font-size="20" fill="#262626" textLength="478.47" lengthAdjust="spacingAndGlyphs"  stroke="#FFFFFF" stroke-width="0.4">Station: c8:09:a8:0d:a4:5d has authorized on ...</text>
<text x="1599.02" y="822.5" font-family="Liberation Sans" font-size="20" fill="#262626" textLength="108.10" lengthAdjust="spacingAndGlyphs"  stroke="#FFFFFF" stroke-width="0.4">IEEE 802.11</text>
<rect x="444.5" y="832.5" width="1299" height="41" fill="#EDEDED" />
<text x="464.75" y="860.5" font-family="Liberation Sans" font-size="20" fill="#262626" textLength="10.62" lengthAdjust="spacingAndGlyphs"  stroke="#EDEDED" stroke-width="0.4">8</text>
<text x="500.83" y="860.5" font-family="Liberation Sans" font-size="20" fill="#262626" textLength="175.34" lengthAdjust="spacingAndGlyphs"  stroke="#EDEDED" stroke-width="0.4">2020-08-24 14:1...</text>
<text x="690.29" y="860.5" font-family="Liberation Sans" font-size="20" fill="#262626" textLength="36.34" lengthAdjust="spacingAndGlyphs"  stroke="#EDEDED" stroke-width="0.4">n...</text>
<text x="739.50" y="860.5" font-family="Liberation Sans" font-size="20" fill="#262626" textLength="41.47" lengthAdjust="spacingAndGlyphs"  stroke="#EDEDED" stroke-width="0.4">W...</text>
<text x="796.30" y="860.5" font-family="Liberation Sans" font-size="20" fill="#262626" textLength="481.47" lengthAdjust="spacingAndGlyphs"  stroke="#EDEDED" stroke-width="0.4">Station: c8:09:a8:0d:a4:5d has associated on ...</text>
<text x="1599.02" y="860.5" font-family="Liberation Sans" font-size="20" fill="#262626" textLength="108.10" lengthAdjust="spacingAndGlyphs"  stroke="#EDEDED" stroke-width="0.4">IEEE 802.11</text>
<text x="464.75" y="898.5" font-family="Liberation Sans" font-size="20" fill="#262626" textLength="10.62" lengthAdjust="spacingAndGlyphs"  stroke="#FFFFFF" stroke-width="0.4">9</text>
<text x="500.83" y="898.5" font-family="Liberation Sans" font-size="20" fill="#262626" textLength="175.34" lengthAdjust="spacingAndGlyphs"  stroke="#FFFFFF" stroke-width="0.4">2020-08-24 14:1...</text>
<text x="690.29" y="898.5" font-family="Liberation Sans" font-size="20" fill="#262626" textLength="36.34" lengthAdjust="spacingAndGlyphs"  stroke="#FFFFFF" stroke-width="0.4">n...</text>
<text x="739.50" y="898.5" font-family="Liberation Sans" font-size="20" fill="#262626" textLength="41.47" lengthAdjust="spacingAndGlyphs"  stroke="#FFFFFF" stroke-width="0.4">W...</text>
<text x="796.30" y="898.5" font-family="Liberation Sans" font-size="20" fill="#262626" textLength="481.95" lengthAdjust="spacingAndGlyphs"  stroke="#FFFFFF" stroke-width="0.4">Station: c8:09:a8:0d:a4:5d has disassoc by Du...</text>
<text x="1599.02" y="898.5" font-family="Liberation Sans" font-size="20" fill="#262626" textLength="108.10" lengthAdjust="spacingAndGlyphs"  stroke="#FFFFFF" stroke-width="0.4">IEEE 802.11</text>
<rect x="444.5" y="908.5" width="1299" height="41" fill="#EDEDED" />
<text x="457.68" y="936.5" font-family="Liberation Sans" font-size="20" fill="#262626" textLength="23.70" lengthAdjust="spacingAndGlyphs"  stroke="#EDEDED" stroke-width="0.4">10</text>
<text x="500.83" y="936.5" font-family="Liberation Sans" font-size="20" fill="#262626" textLength="175.34" lengthAdjust="spacingAndGlyphs"  stroke="#EDEDED" stroke-width="0.4">2020-08-24 14:0...</text>
<text x="690.29" y="936.5" font-family="Liberation Sans" font-size="20" fill="#262626" textLength="36.34" lengthAdjust="spacingAndGlyphs"  stroke="#EDEDED" stroke-width="0.4">n...</text>
<text x="739.50" y="936.5" font-family="Liberation Sans" font-size="20" fill="#262626" textLength="41.47" lengthAdjust="spacingAndGlyphs"  stroke="#EDEDED" stroke-width="0.4">W...</text>
<text x="796.30" y="936.5" font-family="Liberation Sans" font-size="20" fill="#262626" textLength="482.73" lengthAdjust="spacingAndGlyphs"  stroke="#EDEDED" stroke-width="0.4">Station: 76:77:f8:b9:7f:8b has disassoc by iwpri...</text>
<text x="1599.02" y="936.5" font-family="Liberation Sans" font-size="20" fill="#262626" textLength="108.10" lengthAdjust="spacingAndGlyphs"  stroke="#EDEDED" stroke-width="0.4">IEEE 802.11</text>
<text x="457.60" y="974.5" font-family="Liberation Sans" font-size="20" fill="#262626" textLength="23.79" lengthAdjust="spacingAndGlyphs"  stroke="#FFFFFF" stroke-width="0.4">11</text>
<text x="500.83" y="974.5" font-family="Liberation Sans" font-size="20" fill="#262626" textLength="175.34" lengthAdjust="spacingAndGlyphs"  stroke="#FFFFFF" stroke-width="0.4">2020-08-24 14:0...</text>
<text x="690.29" y="974.5" font-family="Liberation Sans" font-size="20" fill="#262626" textLength="36.34" lengthAdjust="spacingAndGlyphs"  stroke="#FFFFFF" stroke-width="0.4">n...</text>
<text x="739.50" y="974.5" font-family="Liberation Sans" font-size="20" fill="#262626" textLength="41.47" lengthAdjust="spacingAndGlyphs"  stroke="#FFFFFF" stroke-width="0.4">W...</text>
<text x="796.30" y="974.5" font-family="Liberation Sans" font-size="20" fill="#262626" textLength="476.95" lengthAdjust="spacingAndGlyphs"  stroke="#FFFFFF" stroke-width="0.4">Station: 76:77:f8:b9:7f:8b has authorized on C...</text>
<text x="1599.02" y="974.5" font-family="Liberation Sans" font-size="20" fill="#262626" textLength="108.10" lengthAdjust="spacingAndGlyphs"  stroke="#FFFFFF" stroke-width="0.4">IEEE 802.11</text>
<rect x="444.5" y="984.5" width="1299" height="41" fill="#EDEDED" />
<text x="457.68" y="1012.5" font-family="Liberation Sans" font-size="20" fill="#262626" textLength="23.70" lengthAdjust="spacingAndGlyphs"  stroke="#EDEDED" stroke-width="0.4">12</text>
<text x="500.83" y="1012.5" font-family="Liberation Sans" font-size="20" fill="#262626" textLength="175.34" lengthAdjust="spacingAndGlyphs"  stroke="#EDEDED" stroke-width="0.4">2020-08-24 14:0...</text>
<text x="690.29" y="1012.5" font-family="Liberation Sans" font-size="20" fill="#262626" textLength="36.34" lengthAdjust="spacingAndGlyphs"  stroke="#EDEDED" stroke-width="0.4">n...</text>
<text x="739.50" y="1012.5" font-family="Liberation Sans" font-size="20" fill="#262626" textLength="41.47" lengthAdjust="spacingAndGlyphs"  stroke="#EDEDED" stroke-width="0.4">W...</text>
<text x="796.30" y="1012.5" font-family="Liberation Sans" font-size="20" fill="#262626" textLength="481.76" lengthAdjust="spacingAndGlyphs"  stroke="#EDEDED" stroke-width="0.4">Station: 76:77:f8:b9:7f:8b has associated on C...</text>
<text x="1599.02" y="1012.5" font-family="Liberation Sans" font-size="20" fill="#262626" textLength="108.10" lengthAdjust="spacingAndGlyphs"  stroke="#EDEDED" stroke-width="0.4">IEEE 802.11</text>
<text x="457.68" y="1050.5" font-family="Liberation Sans" font-size="20" fill="#262626" textLength="23.70" lengthAdjust="spacingAndGlyphs"  stroke="#FFFFFF" stroke-width="0.4">13</text>
<text x="500.83" y="1050.5" font-family="Liberation Sans" font-size="20" fill="#262626" textLength="175.34" lengthAdjust="spacingAndGlyphs"  stroke="#FFFFFF" stroke-width="0.4">2020-08-24 14:0...</text>
<text x="690.29" y="1050.5" font-family="Liberation Sans" font-size="20" fill="#262626" textLength="36.34" lengthAdjust="spacingAndGlyphs"  stroke="#FFFFFF" stroke-width="0.4">n...</text>
<text x="739.50" y="1050.5" font-family="Liberation Sans" font-size="20" fill="#262626" textLength="41.47" lengthAdjust="spacingAndGlyphs"  stroke="#FFFFFF" stroke-width="0.4">W...</text>
<text x="796.30" y="1050.5" font-family="Liberation Sans" font-size="20" fill="#262626" textLength="490.06" lengthAdjust="spacingAndGlyphs"  stroke="#FFFFFF" stroke-width="0.4">Station: c8:09:a8:0d:a4:5d has disassoc by iwp...</text>
<text x="1599.02" y="1050.5" font-family="Liberation Sans" font-size="20" fill="#262626" textLength="108.10" lengthAdjust="spacingAndGlyphs"  stroke="#FFFFFF" stroke-width="0.4">IEEE 802.11</text>
<rect x="444.5" y="1060.5" width="1299" height="41" fill="#EDEDED" />
<text x="457.68" y="1088.5" font-family="Liberation Sans" font-size="20" fill="#262626" textLength="23.70" lengthAdjust="spacingAndGlyphs"  stroke="#EDEDED" stroke-width="0.4">14</text>
<text x="500.83" y="1088.5" font-family="Liberation Sans" font-size="20" fill="#262626" textLength="175.34" lengthAdjust="spacingAndGlyphs"  stroke="#EDEDED" stroke-width="0.4">2020-08-24 14:0...</text>
<text x="690.29" y="1088.5" font-family="Liberation Sans" font-size="20" fill="#262626" textLength="36.34" lengthAdjust="spacingAndGlyphs"  stroke="#EDEDED" stroke-width="0.4">n...</text>
<text x="739.50" y="1088.5" font-family="Liberation Sans" font-size="20" fill="#262626" textLength="41.47" lengthAdjust="spacingAndGlyphs"  stroke="#EDEDED" stroke-width="0.4">W...</text>
<text x="796.30" y="1088.5" font-family="Liberation Sans" font-size="20" fill="#262626" textLength="478.47" lengthAdjust="spacingAndGlyphs"  stroke="#EDEDED" stroke-width="0.4">Station: c8:09:a8:0d:a4:5d has authorized on ...</text>
<text x="1599.02" y="1088.5" font-family="Liberation Sans" font-size="20" fill="#262626" textLength="108.10" lengthAdjust="spacingAndGlyphs"  stroke="#EDEDED" stroke-width="0.4">IEEE 802.11</text>
<text x="457.68" y="1126.5" font-family="Liberation Sans" font-size="20" fill="#262626" textLength="23.70" lengthAdjust="spacingAndGlyphs"  stroke="#FFFFFF" stroke-width="0.4">15</text>
<text x="500.83" y="1126.5" font-family="Liberation Sans" font-size="20" fill="#262626" textLength="175.34" lengthAdjust="spacingAndGlyphs"  stroke="#FFFFFF" stroke-width="0.4">2020-08-24 14:0...</text>
<text x="690.29" y="1126.5" font-family="Liberation Sans" font-size="20" fill="#262626" textLength="36.34" lengthAdjust="spacingAndGlyphs"  stroke="#FFFFFF" stroke-width="0.4">n...</text>
<text x="739.50" y="1126.5" font-family="Liberation Sans" font-size="20" fill="#262626" textLength="41.47" lengthAdjust="spacingAndGlyphs"  stroke="#FFFFFF" stroke-width="0.4">W...</text>
<text x="796.30" y="1126.5" font-family="Liberation Sans" font-size="20" fill="#262626" textLength="481.47" lengthAdjust="spacingAndGlyphs"  stroke="#FFFFFF" stroke-width="0.4">Station: c8:09:a8:0d:a4:5d has associated on ...</text>
<text x="1599.02" y="1126.5" font-family="Liberation Sans" font-size="20" fill="#262626" textLength="108.10" lengthAdjust="spacingAndGlyphs"  stroke="#FFFFFF" stroke-width="0.4">IEEE 802.11</text>
<rect x="444.5" y="1136.5" width="1299" height="41" fill="#EDEDED" />
<text x="457.68" y="1164.5" font-family="Liberation Sans" font-size="20" fill="#262626" textLength="23.70" lengthAdjust="spacingAndGlyphs"  stroke="#EDEDED" stroke-width="0.4">16</text>
<text x="500.83" y="1164.5" font-family="Liberation Sans" font-size="20" fill="#262626" textLength="175.34" lengthAdjust="spacingAndGlyphs"  stroke="#EDEDED" stroke-width="0.4">2020-08-24 14:0...</text>
<text x="690.29" y="1164.5" font-family="Liberation Sans" font-size="20" fill="#262626" textLength="36.34" lengthAdjust="spacingAndGlyphs"  stroke="#EDEDED" stroke-width="0.4">n...</text>
<text x="739.50" y="1164.5" font-family="Liberation Sans" font-size="20" fill="#262626" textLength="41.47" lengthAdjust="spacingAndGlyphs"  stroke="#EDEDED" stroke-width="0.4">W...</text>
<text x="796.30" y="1164.5" font-family="Liberation Sans" font-size="20" fill="#262626" textLength="482.73" lengthAdjust="spacingAndGlyphs"  stroke="#EDEDED" stroke-width="0.4">Station: 76:77:f8:b9:7f:8b has disassoc by iwpri...</text>
<text x="1599.02" y="1164.5" font-family="Liberation Sans" font-size="20" fill="#262626" textLength="108.10" lengthAdjust="spacingAndGlyphs"  stroke="#EDEDED" stroke-width="0.4">IEEE 802.11</text>
<text x="457.68" y="1202.5" font-family="Liberation Sans" font-size="20" fill="#262626" textLength="23.70" lengthAdjust="spacingAndGlyphs"  stroke="#FFFFFF" stroke-width="0.4">17</text>
<text x="500.83" y="1202.5" font-family="Liberation Sans" font-size="20" fill="#262626" textLength="175.34" lengthAdjust="spacingAndGlyphs"  stroke="#FFFFFF" stroke-width="0.4">2020-08-24 14:0...</text>
<text x="690.29" y="1202.5" font-family="Liberation Sans" font-size="20" fill="#262626" textLength="36.34" lengthAdjust="spacingAndGlyphs"  stroke="#FFFFFF" stroke-width="0.4">n...</text>
<text x="739.50" y="1202.5" font-family="Liberation Sans" font-size="20" fill="#262626" textLength="41.47" lengthAdjust="spacingAndGlyphs"  stroke="#FFFFFF" stroke-width="0.4">W...</text>
<text x="796.30" y="1202.5" font-family="Liberation Sans" font-size="20" fill="#262626" textLength="476.95" lengthAdjust="spacingAndGlyphs"  stroke="#FFFFFF" stroke-width="0.4">Station: 76:77:f8:b9:7f:8b has authorized on C...</text>
<text x="1599.02" y="1202.5" font-family="Liberation Sans" font-size="20" fill="#262626" textLength="108.10" lengthAdjust="spacingAndGlyphs"  stroke="#FFFFFF" stroke-width="0.4">IEEE 802.11</text>
<rect x="444.5" y="1212.5" width="1299" height="41" fill="#EDEDED" />
<text x="457.68" y="1240.5" font-family="Liberation Sans" font-size="20" fill="#262626" textLength="23.70" lengthAdjust="spacingAndGlyphs"  stroke="#EDEDED" stroke-width="0.4">18</text>
<text x="500.83" y="1240.5" font-family="Liberation Sans" font-size="20" fill="#262626" textLength="175.34" lengthAdjust="spacingAndGlyphs"  stroke="#EDEDED" stroke-width="0.4">2020-08-24 14:0...</text>
<text x="690.29" y="1240.5" font-family="Liberation Sans" font-size="20" fill="#262626" textLength="36.34" lengthAdjust="spacingAndGlyphs"  stroke="#EDEDED" stroke-width="0.4">n...</text>
<text x="739.50" y="1240.5" font-family="Liberation Sans" font-size="20" fill="#262626" textLength="41.47" lengthAdjust="spacingAndGlyphs"  stroke="#EDEDED" stroke-width="0.4">W...</text>
<text x="796.30" y="1240.5" font-family="Liberation Sans" font-size="20" fill="#262626" textLength="481.76" lengthAdjust="spacingAndGlyphs"  stroke="#EDEDED" stroke-width="0.4">Station: 76:77:f8:b9:7f:8b has associated on C...</text>
<text x="1599.02" y="1240.5" font-family="Liberation Sans" font-size="20" fill="#262626" textLength="108.10" lengthAdjust="spacingAndGlyphs"  stroke="#EDEDED" stroke-width="0.4">IEEE 802.11</text>
<text x="457.68" y="1278.5" font-family="Liberation Sans" font-size="20" fill="#262626" textLength="23.70" lengthAdjust="spacingAndGlyphs"  stroke="#FFFFFF" stroke-width="0.4">19</text>
<text x="500.83" y="1278.5" font-family="Liberation Sans" font-size="20" fill="#262626" textLength="175.34" lengthAdjust="spacingAndGlyphs"  stroke="#FFFFFF" stroke-width="0.4">2020-08-24 14:0...</text>
<text x="690.29" y="1278.5" font-family="Liberation Sans" font-size="20" fill="#262626" textLength="36.34" lengthAdjust="spacingAndGlyphs"  stroke="#FFFFFF" stroke-width="0.4">n...</text>
<text x="739.50" y="1278.5" font-family="Liberation Sans" font-size="20" fill="#262626" textLength="41.47" lengthAdjust="spacingAndGlyphs"  stroke="#FFFFFF" stroke-width="0.4">W...</text>
<text x="796.30" y="1278.5" font-family="Liberation Sans" font-size="20" fill="#262626" textLength="478.47" lengthAdjust="spacingAndGlyphs"  stroke="#FFFFFF" stroke-width="0.4">Station: c8:09:a8:0d:a4:5d has authorized on ...</text>
<text x="1599.02" y="1278.5" font-family="Liberation Sans" font-size="20" fill="#262626" textLength="108.10" lengthAdjust="spacingAndGlyphs"  stroke="#FFFFFF" stroke-width="0.4">IEEE 802.11</text>
<rect x="444.5" y="1288.5" width="1299" height="41" fill="#EDEDED" />
<text x="457.68" y="1316.5" font-family="Liberation Sans" font-size="20" fill="#262626" textLength="23.70" lengthAdjust="spacingAndGlyphs"  stroke="#EDEDED" stroke-width="0.4">20</text>
<text x="500.83" y="1316.5" font-family="Liberation Sans" font-size="20" fill="#262626" textLength="175.34" lengthAdjust="spacingAndGlyphs"  stroke="#EDEDED" stroke-width="0.4">2020-08-24 14:0...</text>
<text x="690.29" y="1316.5" font-family="Liberation Sans" font-size="20" fill="#262626" textLength="36.34" lengthAdjust="spacingAndGlyphs"  stroke="#EDEDED" stroke-width="0.4">n...</text>
<text x="739.50" y="1316.5" font-family="Liberation Sans" font-size="20" fill="#262626" textLength="41.47" lengthAdjust="spacingAndGlyphs"  stroke="#EDEDED" stroke-width="0.4">W...</text>
<text x="796.30" y="1316.5" font-family="Liberation Sans" font-size="20" fill="#262626" textLength="481.47" lengthAdjust="spacingAndGlyphs"  stroke="#EDEDED" stroke-width="0.4">Station: c8:09:a8:0d:a4:5d has associated on ...</text>
<text x="1599.02" y="1316.5" font-family="Liberation Sans" font-size="20" fill="#262626" textLength="108.10" lengthAdjust="spacingAndGlyphs"  stroke="#EDEDED" stroke-width="0.4">IEEE 802.11</text>
<rect x="1775" y="491" width="1.8" height="843" fill="#BDBDBD" />
<text x="1721.71" y="1406" font-family="Liberation Sans" font-size="17.5" fill="#000000" textLength="43.21" lengthAdjust="spacingAndGlyphs"  stroke="#D3DFEA" stroke-width="0.3">14:48</text>
<text x="1699.60" y="1433.5" font-family="Liberation Sans" font-size="17.5" fill="#000000" textLength="86.44" lengthAdjust="spacingAndGlyphs"  stroke="#D3DFEA" stroke-width="0.3">24.08.2020</text>
<path d="M1591 1418 L1599.5 1408 L1608 1418" fill="none" stroke="#111" stroke-width="1.4"/>
<g fill="none" stroke="#111" stroke-width="1.3"><rect x="1628.5" y="1408.5" width="18" height="12"/><path d="M1637.5 1420.5 V1423.5 M1632 1423.5 H1643"/><rect x="1623.5" y="1404.5" width="7" height="7" fill="#D3DFEA"/><path d="M1627 1407 V1409"/></g>
<g fill="none" stroke="#111" stroke-width="1.3"><path d="M1660.5 1409.5 H1664.5 L1669.5 1404.5 V1422 L1664.5 1417 H1660.5 Z"/><path d="M1673 1409.5 Q1675 1413 1673 1416.5"/><path d="M1676.5 1407 Q1680 1413 1676.5 1419"/><path d="M1680 1404.5 Q1685 1413 1680 1421.5"/></g>
<path d="M1815.5 1402 H1839 V1418.5 H1831 L1827 1423.5 L1823 1418.5 H1815.5 Z" fill="none" stroke="#111" stroke-width="1.3"/>
<rect x="1870" y="1383" width="1" height="60" fill="#A9B6C3" />
<rect x="0" y="1382" width="1877" height="1" fill="#00559C" />
<rect x="0" y="1383" width="1877" height="1" fill="#DDE9F4" />
</svg>
</body></html>
